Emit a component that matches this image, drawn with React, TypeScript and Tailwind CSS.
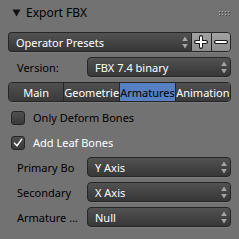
import type { ReactNode } from "react";

const font = { fontFamily: '"Noto Sans", "Open Sans", sans-serif' };

function UpDown() {
  return (
    <svg width="6" height="13" viewBox="0 0 6 13" className="shrink-0">
      <polygon points="3,0.5 5.8,5 0.2,5" fill="#a6a6a6" />
      <polygon points="0.2,8 5.8,8 3,12.5" fill="#a6a6a6" />
    </svg>
  );
}

function Menu({ children, className = "" }: { children: ReactNode; className?: string }) {
  return (
    <div className={`flex h-[20px] items-center justify-between border border-[#262626] bg-gradient-to-b from-[#525252] to-[#373737] pl-[7px] pr-[3px] text-[11px] text-white shadow-[0_1px_0_#7c7c7c] ${className}`}>
      <span className="whitespace-nowrap leading-[15px]">{children}</span>
      <UpDown />
    </div>
  );
}

function PropRow({ label, value }: { label: string; value: string }) {
  return (
    <div className="flex h-[20px] items-center">
      <span className="w-[79px] shrink-0 whitespace-nowrap pl-[9px] text-[11px] leading-[15px] text-black">{label}</span>
      <Menu className="flex-1 rounded-[4px]">{value}</Menu>
    </div>
  );
}

function CheckRow({ label, checked }: { label: string; checked?: boolean }) {
  return (
    <div className="flex h-[20px] items-center">
      <div className="ml-[3px] mt-[2px] grid size-[14px] place-items-center rounded-[3px] border border-[#262626] bg-gradient-to-b from-[#4f4f4f] to-[#393939]">
        {checked && (
          <svg width="10" height="10" viewBox="0 0 10 10">
            <path d="M1.5 5.2 L4 7.8 L8.6 1.4" fill="none" stroke="#f2f2f2" strokeWidth="1.6" strokeLinecap="round" strokeLinejoin="round" />
          </svg>
        )}
      </div>
      <span className={`ml-[8px] text-[11px] leading-[15px] ${checked ? "text-white" : "text-black"}`}>{label}</span>
    </div>
  );
}

function Tab({ children, active, className = "" }: { children: ReactNode; active?: boolean; className?: string }) {
  return (
    <div className={`flex flex-1 items-center justify-center whitespace-nowrap text-[11px] leading-[15px] ${active ? "bg-[#5680c2] text-black" : "bg-gradient-to-b from-[#505050] to-[#3a3a3a] text-white"} ${className}`}>
      {children}
    </div>
  );
}

export default function App() {
  return (
    <div style={font} className="h-[239px] w-[239px] overflow-hidden bg-[#727272] select-none">
      <div className="relative flex h-[25px] items-center">
        <svg width="9" height="8" viewBox="0 0 9 8" className="ml-[12px] mt-[1px]">
          <polygon points="0.5,0.5 8.5,0.5 4.5,7.5" fill="#111" />
        </svg>
        <span className="ml-[5px] text-[12px] leading-[16px] text-black">Export FBX</span>
        <div className="absolute right-[10px] top-[11px] grid grid-cols-4 gap-x-[2px] gap-y-[2px]">
          {Array.from({ length: 8 }, (_, i) => (
            <span key={i} className="size-[1px] bg-[#b0b0b0] shadow-[1px_1px_0_#4a4a4a]" />
          ))}
        </div>
      </div>

      <div className="mt-[7px] flex flex-col gap-[5px] px-[8px]">
        <div className="flex h-[20px]">
          <Menu className="flex-1 rounded-l-[4px] border-r-0">Operator Presets</Menu>
          <div className="flex h-[20px] w-[40px] overflow-hidden rounded-r-[4px] border border-[#262626] shadow-[0_1px_0_#7c7c7c]">
            <div className="grid flex-1 place-items-center border-r border-[#262626] bg-gradient-to-b from-[#a2a2a2] to-[#8c8c8c]">
              <svg width="14" height="14" viewBox="0 0 14 14">
                <path d="M7 2 V12 M2 7 H12" stroke="#1a1a1a" strokeWidth="4" strokeLinecap="round" />
                <path d="M7 2.5 V11.5 M2.5 7 H11.5" stroke="#fff" strokeWidth="2" strokeLinecap="square" />
              </svg>
            </div>
            <div className="grid flex-1 place-items-center bg-gradient-to-b from-[#a2a2a2] to-[#8c8c8c]">
              <svg width="14" height="14" viewBox="0 0 14 14">
                <path d="M2 7 H12" stroke="#1a1a1a" strokeWidth="4" strokeLinecap="round" />
                <path d="M2.5 7 H11.5" stroke="#fff" strokeWidth="2" strokeLinecap="square" />
              </svg>
            </div>
          </div>
        </div>

        <PropRow label="Version:" value="FBX 7.4 binary" />

        <div className="flex h-[20px] overflow-hidden rounded-[4px] border border-[#262626] shadow-[0_1px_0_#7c7c7c]">
          <Tab className="border-r border-[#262626]">Main</Tab>
          <Tab className="border-r border-[#262626]">Geometrie</Tab>
          <Tab active className="border-r border-[#262626]">Armatures</Tab>
          <Tab>Animation</Tab>
        </div>

        <CheckRow label="Only Deform Bones" />
        <CheckRow label="Add Leaf Bones" checked />

        <PropRow label="Primary Bo" value="Y Axis" />
        <PropRow label="Secondary" value="X Axis" />
        <PropRow label="Armature ..." value="Null" />
      </div>
    </div>
  );
}
